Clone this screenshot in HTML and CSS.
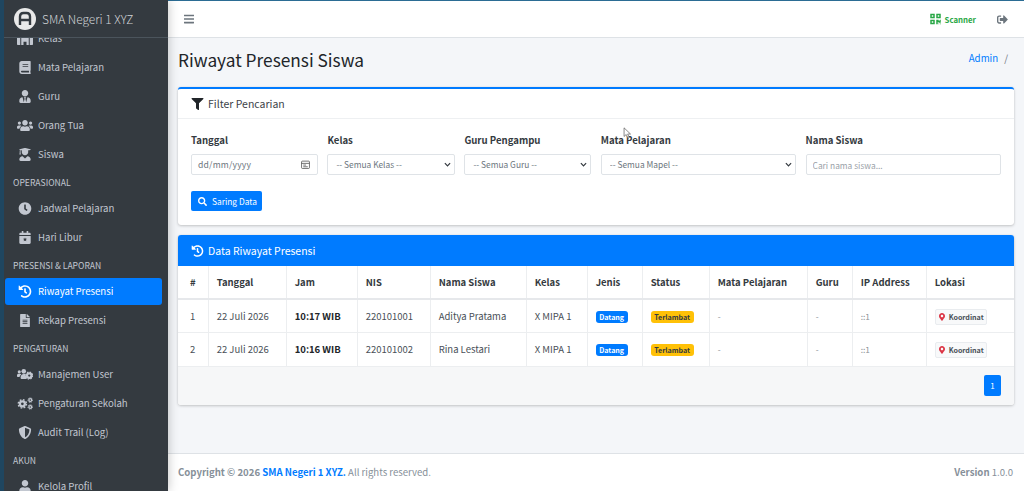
FILE: index.html
```html
<!DOCTYPE html>
<html lang="id">
<head>
    <meta charset="UTF-8">
    <meta name="viewport" content="width=device-width, initial-scale=1.0">
    <title>Riwayat Presensi Siswa</title>
    <link rel="stylesheet" href="styles.css">
</head>
<body>
    <svg class="defs" width="0" height="0">
        <symbol id="i-book" viewBox="0 0 448 512"><path d="M448 360V24c0-13.3-10.7-24-24-24H96C43 0 0 43 0 96v320c0 53 43 96 96 96h328c13.3 0 24-10.7 24-24v-16c0-7.5-3.5-14.3-8.9-18.7-4.2-15.4-4.2-59.3 0-74.7 5.4-4.3 8.9-11.1 8.9-18.6zM128 134c0-3.3 2.7-6 6-6h212c3.3 0 6 2.7 6 6v20c0 3.3-2.7 6-6 6H134c-3.3 0-6-2.7-6-6v-20zm0 64c0-3.3 2.7-6 6-6h212c3.3 0 6 2.7 6 6v20c0 3.3-2.7 6-6 6H134c-3.3 0-6-2.7-6-6v-20zm253.4 250H96c-17.7 0-32-14.3-32-32 0-17.6 14.4-32 32-32h285.4c-1.9 17.1-1.9 46.9 0 64z"/></symbol>
        <symbol id="i-tie" viewBox="0 0 448 512"><path d="M224 256c70.7 0 128-57.3 128-128S294.7 0 224 0 96 57.3 96 128s57.3 128 128 128zm95.8 32.6L272 480l-32-136 32-56h-96l32 56-32 136-47.8-191.4C56.9 292 0 350.3 0 422.4V464c0 26.5 21.5 48 48 48h352c26.5 0 48-21.5 48-48v-41.6c0-72.1-56.9-130.4-128.2-133.8z"/></symbol>
        <symbol id="i-users" viewBox="0 0 640 512"><path d="M96 224c35.3 0 64-28.7 64-64s-28.7-64-64-64-64 28.7-64 64 28.7 64 64 64zm448 0c35.3 0 64-28.7 64-64s-28.7-64-64-64-64 28.7-64 64 28.7 64 64 64zm32 32h-64c-17.6 0-33.5 7.1-45.1 18.6 40.3 22.1 68.9 62 75.1 109.4h66c17.7 0 32-14.3 32-32v-32c0-35.3-28.7-64-64-64zm-256 0c61.9 0 112-50.1 112-112S381.9 32 320 32 208 82.1 208 144s50.1 112 112 112zm76.8 32h-8.3c-20.8 10-43.9 16-68.5 16s-47.6-6-68.5-16h-8.3C179.6 288 128 339.6 128 403.2V432c0 26.5 21.5 48 48 48h288c26.5 0 48-21.5 48-48v-28.8c0-63.6-51.6-115.2-115.2-115.2zm-223.7-13.4C161.5 263.1 145.6 256 128 256H64c-35.3 0-64 28.7-64 64v32c0 17.7 14.3 32 32 32h65.9c6.3-47.4 34.9-87.3 75.2-109.4z"/></symbol>
        <symbol id="i-grad" viewBox="0 0 448 512"><path d="M319.4 320.6L224 416l-95.4-95.4C57.1 323.7 0 382.2 0 454.4v9.6c0 26.5 21.5 48 48 48h352c26.5 0 48-21.5 48-48v-9.6c0-72.2-57.1-130.7-128.6-133.8zM13.6 79.8l6.4 1.5v58.4c-7 4.2-12 11.5-12 20.3 0 8.4 4.6 15.4 11.1 19.7L3.5 242c-1.7 6.9 2.1 14 7.6 14h41.8c5.5 0 9.3-7.1 7.6-14l-15.6-62.3C51.4 175.4 56 168.4 56 160c0-8.8-5-16.1-12-20.3V87.1l66 15.9c-8.6 17.2-14 36.4-14 57 0 70.7 57.3 128 128 128s128-57.3 128-128c0-20.6-5.3-39.8-14-57l96.3-23.2c18.2-4.4 18.2-27.1 0-31.5l-190.4-46c-13-3.1-26.7-3.1-39.7 0L13.6 48.2c-18.1 4.4-18.1 27.2 0 31.6z"/></symbol>
        <symbol id="i-clock" viewBox="0 0 512 512"><path d="M256,8C119,8,8,119,8,256S119,504,256,504,504,393,504,256,393,8,256,8Zm92.49,313h0l-20,25a16,16,0,0,1-22.49,2.5h0l-67-49.72a40,40,0,0,1-15-31.23V112a16,16,0,0,1,16-16h32a16,16,0,0,1,16,16V256l58,42.5A16,16,0,0,1,348.49,321Z"/></symbol>
        <symbol id="i-cal" viewBox="0 0 448 512"><path fill-rule="evenodd" d="M436 160H12c-6.6 0-12-5.4-12-12v-36c0-26.5 21.5-48 48-48h48V12c0-6.6 5.4-12 12-12h40c6.6 0 12 5.4 12 12v52h128V12c0-6.6 5.4-12 12-12h40c6.6 0 12 5.4 12 12v52h48c26.5 0 48 21.5 48 48v36c0 6.6-5.4 12-12 12zM12 192h424c6.6 0 12 5.4 12 12v260c0 26.5-21.5 48-48 48H48c-26.5 0-48-21.5-48-48V204c0-6.6 5.4-12 12-12zm212 60l-24 52-56 6 42 38-12 56 50-28 50 28-12-56 42-38-56-6z"/></symbol>
        <symbol id="i-history" viewBox="0 0 512 512"><path d="M504 255.531c.253 136.64-111.18 248.372-247.82 248.468-59.015.042-113.223-20.53-155.822-54.911-11.077-8.94-11.905-25.541-1.839-35.607l11.267-11.267c8.609-8.609 22.353-9.551 31.891-1.984C173.062 425.135 212.781 440 256 440c101.705 0 184-82.311 184-184 0-101.705-82.311-184-184-184-48.814 0-93.149 18.969-126.068 49.932l50.754 50.754c10.08 10.08 2.941 27.314-11.313 27.314H24c-8.837 0-16-7.163-16-16V38.627c0-14.254 17.234-21.393 27.314-11.314l49.372 49.372C129.209 34.136 189.552 8 256 8c136.81 0 247.747 110.78 248 247.531zm-180.912 78.784l9.823-12.63c8.138-10.463 6.253-25.542-4.21-33.679L288 256.349V152c0-13.255-10.745-24-24-24h-16c-13.255 0-24 10.745-24 24v135.651l65.409 50.874c10.463 8.137 25.541 6.253 33.679-4.21z"/></symbol>
        <symbol id="i-file" viewBox="0 0 384 512"><path d="M224 136V0H24C10.7 0 0 10.7 0 24v464c0 13.3 10.7 24 24 24h336c13.3 0 24-10.7 24-24V160H248c-13.2 0-24-10.8-24-24zm64 236c0 6.6-5.4 12-12 12H108c-6.6 0-12-5.4-12-12v-8c0-6.6 5.4-12 12-12h168c6.6 0 12 5.4 12 12v8zm0-64c0 6.6-5.4 12-12 12H108c-6.6 0-12-5.4-12-12v-8c0-6.6 5.4-12 12-12h168c6.6 0 12 5.4 12 12v8zm0-72v8c0 6.6-5.4 12-12 12H108c-6.6 0-12-5.4-12-12v-8c0-6.6 5.4-12 12-12h168c6.6 0 12 5.4 12 12zm96-114.1v6.1H256V0h6.1c6.4 0 12.5 2.5 17 7l97.9 98c4.5 4.5 7 10.6 7 16.9z"/></symbol>
        <symbol id="i-usercog" viewBox="0 0 640 512">
            <circle cx="90" cy="150" r="62"/><circle cx="270" cy="130" r="92"/>
            <path d="M60 230h60c22 0 40 8 54 22-40 24-64 62-70 102H30c-17 0-30-13-30-30v-34c0-33 27-60 60-60zM270 240c22 0 44-4 60-12 8 60 40 100 50 120-6 28-2 60 12 84H180c-20 0-36-16-36-36v-30c0-70 56-126 126-126z"/>
            <circle cx="490" cy="300" r="90" fill="none" stroke="currentColor" stroke-width="88"/>
            <circle cx="490" cy="300" r="140" fill="none" stroke="currentColor" stroke-width="50" stroke-dasharray="58 51.900"/>
        </symbol>
        <symbol id="i-cogs" viewBox="0 0 640 512">
            <circle cx="215" cy="270" r="100" fill="none" stroke="currentColor" stroke-width="92"/>
            <circle cx="215" cy="270" r="165" fill="none" stroke="currentColor" stroke-width="56" stroke-dasharray="70 59.600"/>
            <circle cx="530" cy="120" r="56" fill="none" stroke="currentColor" stroke-width="50"/>
            <circle cx="530" cy="120" r="92" fill="none" stroke="currentColor" stroke-width="36" stroke-dasharray="38 34.300"/>
            <circle cx="530" cy="392" r="56" fill="none" stroke="currentColor" stroke-width="50"/>
            <circle cx="530" cy="392" r="92" fill="none" stroke="currentColor" stroke-width="36" stroke-dasharray="38 34.300"/>
        </symbol>
        <symbol id="i-shield" viewBox="0 0 512 512"><path d="M466.5 83.7l-192-80a48.15 48.15 0 0 0-36.9 0l-192 80C27.7 91.1 16 108.6 16 128c0 198.5 114.5 335.7 221.5 380.3 11.8 4.9 25.1 4.9 36.9 0C360.1 472.6 496 349.3 496 128c0-19.4-11.7-36.9-29.5-44.3zM256.1 446.3l-.1-381 175.9 73.3c-3.3 151.4-82.1 261.1-175.8 307.7z"/></symbol>
        <symbol id="i-user" viewBox="0 0 448 512"><path d="M224 256c70.7 0 128-57.3 128-128S294.7 0 224 0 96 57.3 96 128s57.3 128 128 128zm89.6 32h-16.7c-22.2 10.2-46.9 16-72.9 16s-50.6-5.8-72.9-16h-16.7C60.2 288 0 348.2 0 422.4V464c0 26.5 21.5 48 48 48h352c26.5 0 48-21.5 48-48v-41.6c0-74.2-60.2-134.4-134.4-134.4z"/></symbol>
        <symbol id="i-school" viewBox="0 0 640 512"><path d="M0 224h130v288H30c-17 0-30-13-30-30zM170 160h300v352h-90V384h-120v128h-90zM510 224h130v258c0 17-13 30-30 30H510z"/></symbol>
        <symbol id="i-filter" viewBox="0 0 512 512"><path d="M487.976 0H24.028C2.71 0-8.047 25.866 7.058 40.971L192 225.941V432c0 7.831 3.821 15.17 10.237 19.662l80 55.98C298.02 518.69 320 507.493 320 487.98V225.941l184.947-184.97C520.021 25.896 509.338 0 487.976 0z"/></symbol>
        <symbol id="i-search" viewBox="0 0 512 512"><path d="M505 442.7L405.3 343c-4.5-4.5-10.6-7-17-7H372c27.6-35.3 44-79.7 44-128C416 93.1 322.9 0 208 0S0 93.1 0 208s93.1 208 208 208c48.3 0 92.7-16.4 128-44v16.3c0 6.4 2.5 12.5 7 17l99.7 99.7c9.4 9.4 24.6 9.4 33.9 0l28.3-28.3c9.4-9.4 9.4-24.6.1-34zM208 336c-70.7 0-128-57.2-128-128 0-70.7 57.2-128 128-128 70.7 0 128 57.2 128 128 0 70.7-57.2 128-128 128z"/></symbol>
        <symbol id="i-marker" viewBox="0 0 384 512"><path d="M172.268 501.67C26.97 291.031 0 269.413 0 192 0 85.961 85.961 0 192 0s192 85.961 192 192c0 77.413-26.97 99.031-172.268 309.67-9.535 13.774-29.93 13.773-39.464 0zM192 272c44.183 0 80-35.817 80-80s-35.817-80-80-80-80 35.817-80 80 35.817 80 80 80z"/></symbol>
    </svg>

    <div class="app">
        <aside class="sidebar">
            <div class="brand">
                <svg class="logo" viewBox="0 0 22 22">
                    <circle cx="11" cy="11" r="11" fill="#e9e9e9"/>
                    <path d="M6 17V8.5C6 6.5 7.5 5 9.500 5h3C14.500 5 16 6.500 16 8.500V17M6 12h10" fill="none" stroke="#343a40" stroke-width="2.400"/>
                </svg>
                <span>SMA Negeri 1 XYZ</span>
            </div>
            <div class="nav-wrap">
                <nav class="nav">
                    <a class="nav-item"><svg><use href="#i-school"/></svg>Kelas</a>
                    <a class="nav-item"><svg><use href="#i-book"/></svg>Mata Pelajaran</a>
                    <a class="nav-item"><svg><use href="#i-tie"/></svg>Guru</a>
                    <a class="nav-item"><svg><use href="#i-users"/></svg>Orang Tua</a>
                    <a class="nav-item"><svg><use href="#i-grad"/></svg>Siswa</a>
                    <div class="nav-head">OPERASIONAL</div>
                    <a class="nav-item"><svg><use href="#i-clock"/></svg>Jadwal Pelajaran</a>
                    <a class="nav-item"><svg><use href="#i-cal"/></svg>Hari Libur</a>
                    <div class="nav-head">PRESENSI &amp; LAPORAN</div>
                    <a class="nav-item active"><svg><use href="#i-history"/></svg>Riwayat Presensi</a>
                    <a class="nav-item"><svg><use href="#i-file"/></svg>Rekap Presensi</a>
                    <div class="nav-head">PENGATURAN</div>
                    <a class="nav-item"><svg><use href="#i-usercog"/></svg>Manajemen User</a>
                    <a class="nav-item"><svg><use href="#i-cogs"/></svg>Pengaturan Sekolah</a>
                    <a class="nav-item"><svg><use href="#i-shield"/></svg>Audit Trail (Log)</a>
                    <div class="nav-head">AKUN</div>
                    <a class="nav-item"><svg><use href="#i-user"/></svg>Kelola Profil</a>
                </nav>
            </div>
        </aside>

        <div class="main">
            <header class="navbar">
                <svg class="nav-bars" viewBox="0 0 448 512"><path d="M16 132h416c8.837 0 16-7.163 16-16V76c0-8.837-7.163-16-16-16H16C7.163 60 0 67.163 0 76v40c0 8.837 7.163 16 16 16zm0 160h416c8.837 0 16-7.163 16-16v-40c0-8.837-7.163-16-16-16H16c-8.837 0-16 7.163-16 16v40c0 8.837 7.163 16 16 16zm0 160h416c8.837 0 16-7.163 16-16v-40c0-8.837-7.163-16-16-16H16c-8.837 0-16 7.163-16 16v40c0 8.837 7.163 16 16 16z"/></svg>
                <a class="scanner">
                    <svg viewBox="0 0 448 512"><path d="M0 224h192V32H0v192zM64 96h64v64H64V96zm192-64v192h192V32H256zm128 128h-64V96h64v64zM0 480h192V288H0v192zm64-128h64v64H64v-64zm352-64h32v128h-96v-32h-32v96h-64V288h96v32h64v-32zm0 160h32v32h-32v-32zm-64 0h32v32h-32v-32z"/></svg>
                    Scanner
                </a>
                <svg class="logout" viewBox="0 0 512 512"><path d="M497 273L329 441c-15 15-41 4.500-41-17v-96H152c-13.300 0-24-10.700-24-24v-96c0-13.300 10.700-24 24-24h136V88c0-21.400 25.900-32 41-17l168 168c9.300 9.400 9.300 24.600 0 34zM192 436v-40c0-6.600-5.400-12-12-12H96c-17.700 0-32-14.300-32-32V160c0-17.700 14.300-32 32-32h84c6.600 0 12-5.400 12-12V76c0-6.600-5.400-12-12-12H96c-53 0-96 43-96 96v192c0 53 43 96 96 96h84c6.600 0 12-5.400 12-12z"/></svg>
            </header>

            <main class="content">
                <div class="page-head">
                    <h1>Riwayat Presensi Siswa</h1>
                    <div class="crumb"><a>Admin</a><span>/</span></div>
                </div>

                <section class="card card-filter">
                    <div class="card-head">
                        <svg class="head-icon"><use href="#i-filter"/></svg>Filter Pencarian
                    </div>
                    <div class="card-body">
                        <div class="filter-grid">
                            <div class="field">
                                <label>Tanggal</label>
                                <div class="control date-box">dd/mm/yyyy
                                    <svg viewBox="0 0 16 16"><path d="M2.500 2h11A1.500 1.500 0 0 1 15 3.500v10a1.500 1.500 0 0 1-1.500 1.500h-11A1.500 1.500 0 0 1 1 13.500v-10A1.500 1.500 0 0 1 2.500 2zM1 6h14M4 9h5M4 12h8" fill="none" stroke="#444" stroke-width="1.300"/></svg>
                                </div>
                            </div>
                            <div class="field">
                                <label>Kelas</label>
                                <select class="control pick"><option>-- Semua Kelas --</option></select>
                            </div>
                            <div class="field">
                                <label>Guru Pengampu</label>
                                <select class="control pick"><option>-- Semua Guru --</option></select>
                            </div>
                            <div class="field">
                                <label>Mata Pelajaran</label>
                                <select class="control pick"><option>-- Semua Mapel --</option></select>
                            </div>
                            <div class="field">
                                <label>Nama Siswa</label>
                                <input class="control" type="text" placeholder="Cari nama siswa...">
                            </div>
                        </div>
                        <button class="btn"><svg><use href="#i-search"/></svg>Saring Data</button>
                    </div>
                </section>

                <section class="card">
                    <div class="card-head head-blue">
                        <svg class="head-icon"><use href="#i-history"/></svg>Data Riwayat Presensi
                    </div>
                    <table class="table">
                        <colgroup>
                            <col class="c1"><col class="c2"><col class="c3"><col class="c4"><col class="c5"><col class="c6">
                            <col class="c7"><col class="c8"><col class="c9"><col class="c10"><col class="c11"><col class="c12">
                        </colgroup>
                        <thead>
                            <tr>
                                <th class="center">#</th><th>Tanggal</th><th>Jam</th><th>NIS</th><th>Nama Siswa</th><th>Kelas</th>
                                <th>Jenis</th><th>Status</th><th>Mata Pelajaran</th><th>Guru</th><th>IP Address</th><th>Lokasi</th>
                            </tr>
                        </thead>
                        <tbody>
                            <tr>
                                <td class="center">1</td><td>22 Juli 2026</td><td><b>10:17 WIB</b></td><td>220101001</td><td>Aditya Pratama</td><td>X MIPA 1</td>
                                <td><span class="badge blue">Datang</span></td><td><span class="badge yellow">Terlambat</span></td>
                                <td class="muted">-</td><td class="muted">-</td><td class="muted">::1</td>
                                <td><a class="coord"><svg><use href="#i-marker"/></svg>Koordinat</a></td>
                            </tr>
                            <tr>
                                <td class="center">2</td><td>22 Juli 2026</td><td><b>10:16 WIB</b></td><td>220101002</td><td>Rina Lestari</td><td>X MIPA 1</td>
                                <td><span class="badge blue">Datang</span></td><td><span class="badge yellow">Terlambat</span></td>
                                <td class="muted">-</td><td class="muted">-</td><td class="muted">::1</td>
                                <td><a class="coord"><svg><use href="#i-marker"/></svg>Koordinat</a></td>
                            </tr>
                        </tbody>
                    </table>
                    <div class="card-foot"><a class="page-btn">1</a></div>
                </section>
            </main>

            <footer class="footer">
                <div><b>Copyright &copy; 2026 <a>SMA Negeri 1 XYZ.</a></b> All rights reserved.</div>
                <div><b>Version</b> 1.0.0</div>
            </footer>
        </div>
    </div>

    <svg class="cursor" viewBox="0 0 10 14"><path d="M1 1v10l2.500-2.200L5.500 13l1.600-.7L5.200 8.200H8.500z" fill="#fff" stroke="#555" stroke-width=".8"/></svg>
</body>
</html>
```

FILE: styles.css
```css
* {
    box-sizing: border-box;
}
html, body {
    height: 100%;
}
body {
    margin: 0;
    overflow: hidden;
    font-family: "Noto Sans CJK SC", "Noto Sans", sans-serif;
    font-size: 10px;
    color: #212529;
    background: #f4f6f9;
}
.defs {
    position: absolute;
}
svg {
    fill: currentColor;
}
.app {
    display: flex;
    height: 491px;
}

/* sidebar */
.sidebar {
    width: 168px;
    flex: none;
    display: flex;
    flex-direction: column;
    background: #343a40;
    border-left: 4px solid #1f4660;
    z-index: 2;
    box-shadow: 0 0 10px rgba(0, 0, 0, .25);
}
.brand {
    height: 38px;
    flex: none;
    display: flex;
    align-items: center;
    gap: 6px;
    padding-left: 10px;
    border-bottom: 1px solid #4b545c;
    color: #d0d3d6;
    font-size: 11.900px;
    line-height: 20px;
    font-weight: 300;
}
.logo {
    width: 22px;
    height: 22px;
}
.nav-wrap {
    flex: 1;
    overflow: hidden;
}
.nav {
    display: flex;
    flex-direction: column;
    margin-top: -13.5px;
    padding: 0 6px 0 1px;
}
.nav-item {
    height: 27px;
    margin-bottom: 2px;
    flex: none;
    display: flex;
    align-items: center;
    padding-left: 33px;
    position: relative;
    border-radius: 3px;
    color: #c2c7d0;
    font-size: 9.600px;
    line-height: 16px;
}
.nav-item svg {
    position: absolute;
    left: 12px;
    top: 7px;
    width: 16px;
    height: 13px;
}
.nav-item.active {
    background: #007bff;
    color: #fff;
}
.nav-head {
    height: 25px;
    flex: none;
    padding: 5px 0 0 8px;
    color: #c2c7d0;
    font-size: 8.600px;
    line-height: 14px;
}

/* top bar */
.main {
    flex: 1;
    min-width: 0;
    display: flex;
    flex-direction: column;
}
.navbar {
    height: 38px;
    flex: none;
    display: flex;
    align-items: center;
    background: #fff;
    border-top: 1px solid #2b6c94;
    border-bottom: 1px solid #dee2e6;
    padding: 0 16px;
    color: #6c757d;
}
.nav-bars {
    width: 10px;
    height: 12px;
    fill: #6c757d;
}
.scanner {
    margin-left: auto;
    display: flex;
    align-items: center;
    gap: 4px;
    color: #28a745;
    font-size: 7.800px;
    font-weight: 700;
}
.scanner svg {
    width: 11px;
    height: 12px;
}
.logout {
    width: 11px;
    height: 11px;
    margin-left: 21px;
    fill: #6c757d;
}

/* content */
.content {
    flex: 1;
    padding: 0 10px;
}
.page-head {
    height: 49px;
    display: flex;
    justify-content: space-between;
    align-items: center;
    padding-bottom: 5px;
}
h1 {
    margin: 0;
    font-size: 17.300px;
    line-height: 26px;
    font-weight: 400;
}
.crumb {
    display: flex;
    gap: 6px;
    padding-right: 6px;
    font-size: 9.700px;
    color: #6c757d;
    margin-top: -4px;
}
.crumb a {
    color: #007bff;
}
.card {
    background: #fff;
    border-radius: 3px;
    box-shadow: 0 0 1px rgba(0, 0, 0, .125), 0 1px 3px rgba(0, 0, 0, .2);
    margin-bottom: 10px;
    overflow: hidden;
}
.card-filter {
    border-top: 2px solid #007bff;
    height: 138px;
}
.card-head {
    height: 30px;
    display: flex;
    align-items: center;
    padding-left: 13px;
    border-bottom: 1px solid #eef0f2;
    font-size: 10.500px;
    line-height: 16px;
    color: #3d4349;
}
.head-icon {
    width: 13px;
    height: 12px;
    margin-right: 4px;
    color: #212529;
}
.head-blue {
    height: 31px;
    background: #007bff;
    color: #fff;
    border-bottom: 0;
}
.head-blue .head-icon {
    color: #fff;
}
.card-body {
    padding: 13px 13px 0;
}
.filter-grid {
    display: grid;
    grid-template-columns: 127px 127.600px 127px 195.400px 195.400px;
    column-gap: 9.400px;
}
.field label {
    display: block;
    margin-bottom: 6px;
    font-size: 9.600px;
    line-height: 16px;
    font-weight: 700;
    color: #343a40;
}
.control {
    display: block;
    width: 100%;
    height: 21px;
    border: 1px solid #dfe3e7;
    border-radius: 2px;
    background: #fff;
    font-family: inherit;
    font-size: 8.400px;
    color: #6c757d;
    padding: 0 6px;
    outline: 0;
}
.pick {
    appearance: none;
    padding: 0 0 2px 8px;
    background: #fff url("data:image/svg+xml,%3Csvg xmlns='http://www.w3.org/2000/svg' viewBox='0 0 8 5'%3E%3Cpath d='M1 1l3 3 3-3' fill='none' stroke='%23343a40' stroke-width='1.400'/%3E%3C/svg%3E") no-repeat right 3px center / 7px 5px;
}
input.control::placeholder {
    color: #9aa1a8;
}
.date-box {
    display: flex;
    align-items: center;
    justify-content: space-between;
    font-size: 8.600px;
    letter-spacing: .2px;
    color: #6c757d;
    padding: 0 7px 0 6px;
    line-height: 19px;
}
.date-box svg {
    width: 9px;
    height: 9px;
    fill: none;
}
.btn {
    display: flex;
    align-items: center;
    gap: 5px;
    height: 20px;
    width: 71px;
    margin-top: 16px;
    padding: 0 0 0 7px;
    border: 0;
    border-radius: 2px;
    background: #007bff;
    color: #fff;
    font-family: inherit;
    font-size: 8.400px;
    white-space: nowrap;
}
.btn svg {
    width: 9px;
    height: 9px;
    flex: none;
}

/* table */
.table {
    width: 100%;
    border-collapse: collapse;
    table-layout: fixed;
}
.c1 { width: 30px; }
.c2 { width: 78px; }
.c3 { width: 71px; }
.c4 { width: 73px; }
.c5 { width: 96px; }
.c6 { width: 61px; }
.c7 { width: 55px; }
.c8 { width: 67px; }
.c9 { width: 98px; }
.c10 { width: 45px; }
.c11 { width: 74px; }
.c12 { width: 88px; }
.table th, .table td {
    padding: 0 0 0 8.200px;
    border: 1px solid #eceef0;
    border-top: 0;
    text-align: left;
    white-space: nowrap;
    line-height: 14px;
    font-size: 9.500px;
}
.table th:first-child, .table td:first-child {
    border-left: 0;
}
.table th:last-child, .table td:last-child {
    border-right: 0;
}
.table th {
    height: 33px;
    font-weight: 700;
    color: #343a40;
    border-bottom: 2px solid #e6e8eb;
}
.table td {
    height: 33.500px;
    padding-bottom: 1px;
    color: #495057;
}
.table td b {
    color: #212529;
}
.table .center {
    padding: 0;
    text-align: center;
}
.table .muted {
    color: #8b9298;
    font-size: 8.400px;
}
.badge {
    display: inline-block;
    height: 12px;
    padding: 0 3.500px;
    border-radius: 3px;
    font-size: 7.100px;
    line-height: 12px;
    font-weight: 700;
    vertical-align: -1px;
}
.badge.blue {
    background: #007bff;
    color: #fff;
}
.badge.yellow {
    background: #ffc107;
    color: #343a40;
}
.coord {
    display: inline-flex;
    align-items: center;
    gap: 4px;
    width: 52px;
    height: 16px;
    padding-left: 3px;
    border: 1px solid #e9ecef;
    border-radius: 2px;
    background: #f8f9fa;
    color: #495057;
    font-size: 7.100px;
    font-weight: 700;
    vertical-align: -3px;
}
.coord svg {
    flex: none;
    width: 6px;
    height: 8px;
    color: #dc3545;
}
.card-foot {
    height: 38px;
    display: flex;
    justify-content: flex-end;
    align-items: center;
    padding-right: 13px;
    background: #f6f7f8;
}
.page-btn {
    width: 17px;
    height: 21px;
    border-radius: 2px;
    background: #007bff;
    color: #fff;
    font-size: 8px;
    line-height: 21px;
    text-align: center;
}

/* footer */
.footer {
    height: 38px;
    flex: none;
    display: flex;
    justify-content: space-between;
    align-items: center;
    padding: 0 11px 2px 10px;
    background: #fff;
    border-top: 1px solid #dee2e6;
    color: #869099;
    font-size: 9.600px;
    line-height: 14px;
}
.footer a {
    color: #007bff;
}

/* mouse pointer caught in the capture */
.cursor {
    position: absolute;
    left: 623px;
    top: 127px;
    width: 9px;
    height: 12px;
}
```
